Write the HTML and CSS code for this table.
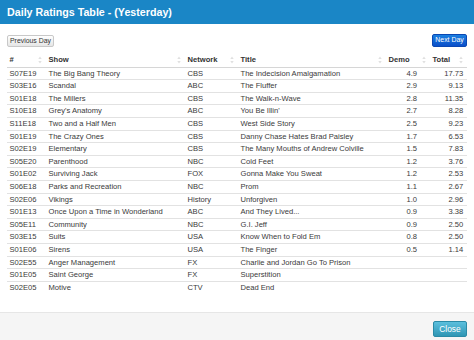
FILE: index.html
```html
<!DOCTYPE html>
<html>
<head>
<meta charset="utf-8">
<link rel="stylesheet" href="styles.css">
</head>
<body>
<div class="modal">
  <div class="modal-header"><h3 class="modal-title">Daily Ratings Table - (Yesterday)</h3></div>
  <div class="modal-body">
    <div class="nav">
      <button class="btn btn-default">Previous Day</button>
      <button class="btn btn-primary">Next Day</button>
    </div>
    <table class="ratings">
      <colgroup>
        <col class="c-num"><col class="c-show"><col class="c-net"><col class="c-title"><col class="c-demo"><col class="c-total">
      </colgroup>
      <thead>
        <tr>
          <th><div class="th"><span>#</span><svg class="sort" width="4" height="8" viewBox="0 0 4 8"><path d="M2 0.5 L3.7 3 L0.3 3 Z M2 7.5 L3.7 5 L0.3 5 Z"/></svg></div></th>
          <th><div class="th"><span>Show</span><svg class="sort" width="4" height="8" viewBox="0 0 4 8"><path d="M2 0.5 L3.7 3 L0.3 3 Z M2 7.5 L3.7 5 L0.3 5 Z"/></svg></div></th>
          <th><div class="th"><span>Network</span><svg class="sort" width="4" height="8" viewBox="0 0 4 8"><path d="M2 0.5 L3.7 3 L0.3 3 Z M2 7.5 L3.7 5 L0.3 5 Z"/></svg></div></th>
          <th><div class="th"><span>Title</span><svg class="sort" width="4" height="8" viewBox="0 0 4 8"><path d="M2 0.5 L3.7 3 L0.3 3 Z M2 7.5 L3.7 5 L0.3 5 Z"/></svg></div></th>
          <th class="h-demo"><div class="th"><span>Demo</span><svg class="sort" width="4" height="8" viewBox="0 0 4 8"><path d="M2 0.5 L3.7 3 L0.3 3 Z M2 7.5 L3.7 5 L0.3 5 Z"/></svg></div></th>
          <th class="h-total"><div class="th"><span>Total</span><svg class="sort" width="4" height="8" viewBox="0 0 4 8"><path d="M2 0.5 L3.7 3 L0.3 3 Z M2 7.5 L3.7 5 L0.3 5 Z"/></svg></div></th>
        </tr>
      </thead>
      <tbody>
        <tr><td>S07E19</td><td>The Big Bang Theory</td><td>CBS</td><td>The Indecision Amalgamation</td><td class="demo">4.9</td><td class="total">17.73</td></tr>
        <tr><td>S03E16</td><td>Scandal</td><td>ABC</td><td>The Fluffer</td><td class="demo">2.9</td><td class="total">9.13</td></tr>
        <tr><td>S01E18</td><td>The Millers</td><td>CBS</td><td>The Walk-n-Wave</td><td class="demo">2.8</td><td class="total">11.35</td></tr>
        <tr><td>S10E18</td><td>Grey's Anatomy</td><td>ABC</td><td>You Be Illin'</td><td class="demo">2.7</td><td class="total">8.28</td></tr>
        <tr><td>S11E18</td><td>Two and a Half Men</td><td>CBS</td><td>West Side Story</td><td class="demo">2.5</td><td class="total">9.23</td></tr>
        <tr><td>S01E19</td><td>The Crazy Ones</td><td>CBS</td><td>Danny Chase Hates Brad Paisley</td><td class="demo">1.7</td><td class="total">6.53</td></tr>
        <tr><td>S02E19</td><td>Elementary</td><td>CBS</td><td>The Many Mouths of Andrew Colville</td><td class="demo">1.5</td><td class="total">7.83</td></tr>
        <tr><td>S05E20</td><td>Parenthood</td><td>NBC</td><td>Cold Feet</td><td class="demo">1.2</td><td class="total">3.76</td></tr>
        <tr><td>S01E02</td><td>Surviving Jack</td><td>FOX</td><td>Gonna Make You Sweat</td><td class="demo">1.2</td><td class="total">2.53</td></tr>
        <tr><td>S06E18</td><td>Parks and Recreation</td><td>NBC</td><td>Prom</td><td class="demo">1.1</td><td class="total">2.67</td></tr>
        <tr><td>S02E06</td><td>Vikings</td><td>History</td><td>Unforgiven</td><td class="demo">1.0</td><td class="total">2.96</td></tr>
        <tr><td>S01E13</td><td>Once Upon a Time in Wonderland</td><td>ABC</td><td>And They Lived...</td><td class="demo">0.9</td><td class="total">3.38</td></tr>
        <tr><td>S05E11</td><td>Community</td><td>NBC</td><td>G.I. Jeff</td><td class="demo">0.9</td><td class="total">2.50</td></tr>
        <tr><td>S03E15</td><td>Suits</td><td>USA</td><td>Know When to Fold Em</td><td class="demo">0.8</td><td class="total">2.50</td></tr>
        <tr><td>S01E06</td><td>Sirens</td><td>USA</td><td>The Finger</td><td class="demo">0.5</td><td class="total">1.14</td></tr>
        <tr><td>S02E55</td><td>Anger Management</td><td>FX</td><td>Charlie and Jordan Go To Prison</td><td class="demo"></td><td class="total"></td></tr>
        <tr><td>S01E05</td><td>Saint George</td><td>FX</td><td>Superstition</td><td class="demo"></td><td class="total"></td></tr>
        <tr><td>S02E05</td><td>Motive</td><td>CTV</td><td>Dead End</td><td class="demo"></td><td class="total"></td></tr>
      </tbody>
    </table>
  </div>
  <div class="modal-footer">
    <button class="btn btn-info">Close</button>
  </div>
</div>
</body>
</html>
```

FILE: styles.css
```css
html, body {
  margin: 0;
  padding: 0;
  background: #ffffff;
}

body {
  font-family: "Liberation Sans", Arial, sans-serif;
  color: #333333;
}

.modal {
  width: 474px;
  height: 340px;
  display: flex;
  flex-direction: column;
  overflow: hidden;
}

.modal-header {
  height: 24px;
  flex: none;
  background: #1a86c6;
  padding-left: 7px;
  box-sizing: border-box;
}

.modal-title {
  margin: 0;
  font-size: 10.7px;
  font-weight: bold;
  line-height: 24px;
  color: #ffffff;
}

.modal-body {
  flex: 1;
  padding: 10px 7px 0 7px;
}

.nav {
  display: flex;
  justify-content: space-between;
  align-items: flex-end;
  height: 13px;
}

.btn {
  font-family: "Liberation Sans", Arial, sans-serif;
  font-size: 6.9px;
  padding: 0;
  margin: 0;
  border-radius: 2px;
  box-sizing: border-box;
  white-space: nowrap;
  text-align: center;
  line-height: 1;
  cursor: pointer;
}

.btn-default {
  height: 12px;
  width: 47px;
  color: #333333;
  background: linear-gradient(#ffffff, #e6e6e6);
  border: 1px solid #c8c8c8;
}

.btn-primary {
  height: 13px;
  width: 35px;
  color: #ffffff;
  background: linear-gradient(#1b7fe0, #0a4fc9);
  border: 1px solid #0a47b3;
}

.ratings {
  width: 460px;
  margin-top: 6px;
  border-collapse: separate;
  border-spacing: 0;
  table-layout: fixed;
  font-size: 7.6px;
}

.c-num { width: 39px; }
.c-show { width: 139px; }
.c-net { width: 53px; }
.c-title { width: 148px; }
.c-demo { width: 44px; }
.c-total { width: 37px; }

.ratings th {
  padding: 0 4.5px 0 2.5px;
  height: 13.7px;
  line-height: 13.7px;
  font-weight: bold;
  text-align: left;
  color: #333333;
}

.th {
  display: flex;
  align-items: center;
  justify-content: space-between;
  height: 13.7px;
}

.h-demo { padding-right: 6.5px; }
.h-total { padding-right: 3px; }

.sort {
  fill: #e0e0e0;
  flex: none;
}

.ratings td {
  padding: 0 2.5px;
  height: 12.6px;
  line-height: 11.6px;
  border-top: 1px solid #e2e2e2;
  white-space: nowrap;
  overflow: hidden;
  box-sizing: border-box;
  color: #3a3a3a;
}

.ratings tbody tr:first-child td {
  border-top-color: #d6d6d6;
}

.ratings td.demo {
  text-align: right;
  padding-right: 13px;
}

.ratings td.total {
  text-align: right;
  padding-right: 3.7px;
}

.modal-footer {
  height: 28px;
  flex: none;
  box-sizing: border-box;
  background: #f5f5f5;
  border-top: 1px solid #e6e6e6;
  padding: 8px 7px 0 0;
  display: flex;
  justify-content: flex-end;
  align-items: flex-start;
}

.btn-info {
  height: 16px;
  width: 34px;
  font-size: 8.4px;
  color: #ffffff;
  background: linear-gradient(#5bbfdd, #2f96b4);
  border: 1px solid #2a8aa6;
}
```
